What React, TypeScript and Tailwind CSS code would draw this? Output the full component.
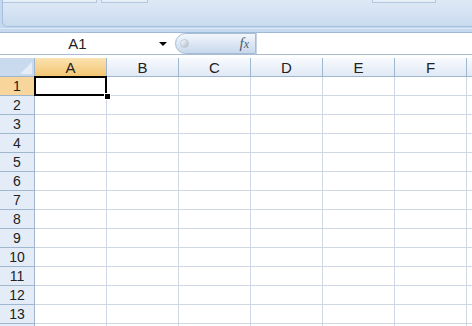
import React from "react";

const COLS = ["A", "B", "C", "D", "E", "F", ""];
const ROWS = Array.from({ length: 14 }, (_, i) => i + 1);

export default function App() {
  return (
    <div className="w-[472px] h-[326px] overflow-hidden bg-white font-['Liberation_Sans',Arial,sans-serif] text-[#222]">
      {/* Ribbon bottom */}
      <div className="h-[28px] bg-[#c4d8ef] pl-[2px]">
        <div className="h-[27px] bg-gradient-to-b from-[#dfe9f5] to-[#c9dbf0] border-l border-b border-[#a6bfdc] rounded-bl-[5px] flex items-start">
          <div className="w-[94px] h-[3px] border-b border-r border-[#b3c7df] bg-[#e6eef8]" />
          <div className="w-[4px]" />
          <div className="w-[47px] h-[3px] border-b border-l border-r border-[#b3c7df] bg-[#e6eef8]" />
          <div className="w-[224px]" />
          <div className="w-[64px] h-[3px] border-b border-l border-r border-[#b3c7df] bg-[#e6eef8]" />
        </div>
      </div>
      {/* strip */}
      <div className="h-[5px] bg-[#c6d9f0] border-t border-[#dce8f6] border-b border-b-[#9fb9d8]" />
      {/* formula bar */}
      <div className="h-[21px] flex bg-white">
        <div className="w-[175px] flex items-center">
          <div className="w-[155px] text-center text-[15px] leading-none">A1</div>
          <div className="ml-[4px] w-0 h-0 border-l-[4px] border-r-[4px] border-t-[4px] border-l-transparent border-r-transparent border-t-black" />
        </div>
        <div className="w-[81px] h-[21px] rounded-l-[11px] border border-[#a7bcd6] bg-gradient-to-b from-[#f3f7fc] via-[#dde7f4] to-[#c8d8ec] flex items-center pl-[4px] pr-[6px] justify-between">
          <div className="w-[9px] h-[9px] rounded-full bg-gradient-to-br from-[#ffffff] to-[#aeb9c7] border border-[#c0cad6]" />
          <span className="font-['Liberation_Serif',serif] italic text-[15px] leading-none text-[#4a5a70]">
            f<span className="text-[12px]">x</span>
          </span>
        </div>
        <div className="flex-1 border-l border-[#c5d3e4]" />
      </div>
      <div className="h-px bg-[#a9bbd1]" />
      <div className="h-[3px] bg-white" />
      {/* header row */}
      <div className="flex h-[19px]">
        <div className="w-[35px] shrink-0 border-r border-b border-[#9eb6ce] bg-[#c9d9ee] relative overflow-hidden">
          <div className="absolute right-[2px] bottom-[2px] w-0 h-0 border-t-[12px] border-r-[12px] border-t-transparent border-r-[#e6edf7]" />
        </div>
        {COLS.map((c, i) => (
          <div
            key={i}
            className={
              "w-[72px] shrink-0 border-r border-b border-[#9eb6ce] flex items-center justify-center text-[15px] leading-none " +
              (i === 0
                ? "bg-gradient-to-b from-[#fbe2b1] to-[#f3c670] border-b-[#c29b4c]"
                : "bg-gradient-to-b from-[#f8fafd] to-[#e1e9f5]")
            }
          >
            {c}
          </div>
        ))}
      </div>
      {/* rows */}
      {ROWS.map((r) => (
        <div key={r} className="flex h-[19px]">
          <div
            className={
              "w-[35px] shrink-0 border-r border-b border-[#9eb6ce] flex items-center justify-center text-[14px] leading-none " +
              (r === 1 ? "bg-[#f8d69b] border-r-[#c29b4c]" : "bg-[#e4ecf7]")
            }
          >
            {r < 14 ? r : ""}
          </div>
          {COLS.map((_, i) => (
            <div key={i} className="w-[72px] shrink-0 border-r border-b border-[#d0d7e5] relative">
              {r === 1 && i === 0 && (
                <>
                  <div className="absolute left-[-1px] top-[-1px] w-[73px] h-[20px] border-2 border-black z-10" />
                  <div className="absolute right-[-5px] bottom-[-5px] w-[7px] h-[7px] bg-black border border-white z-20" />
                </>
              )}
            </div>
          ))}
        </div>
      ))}
    </div>
  );
}
